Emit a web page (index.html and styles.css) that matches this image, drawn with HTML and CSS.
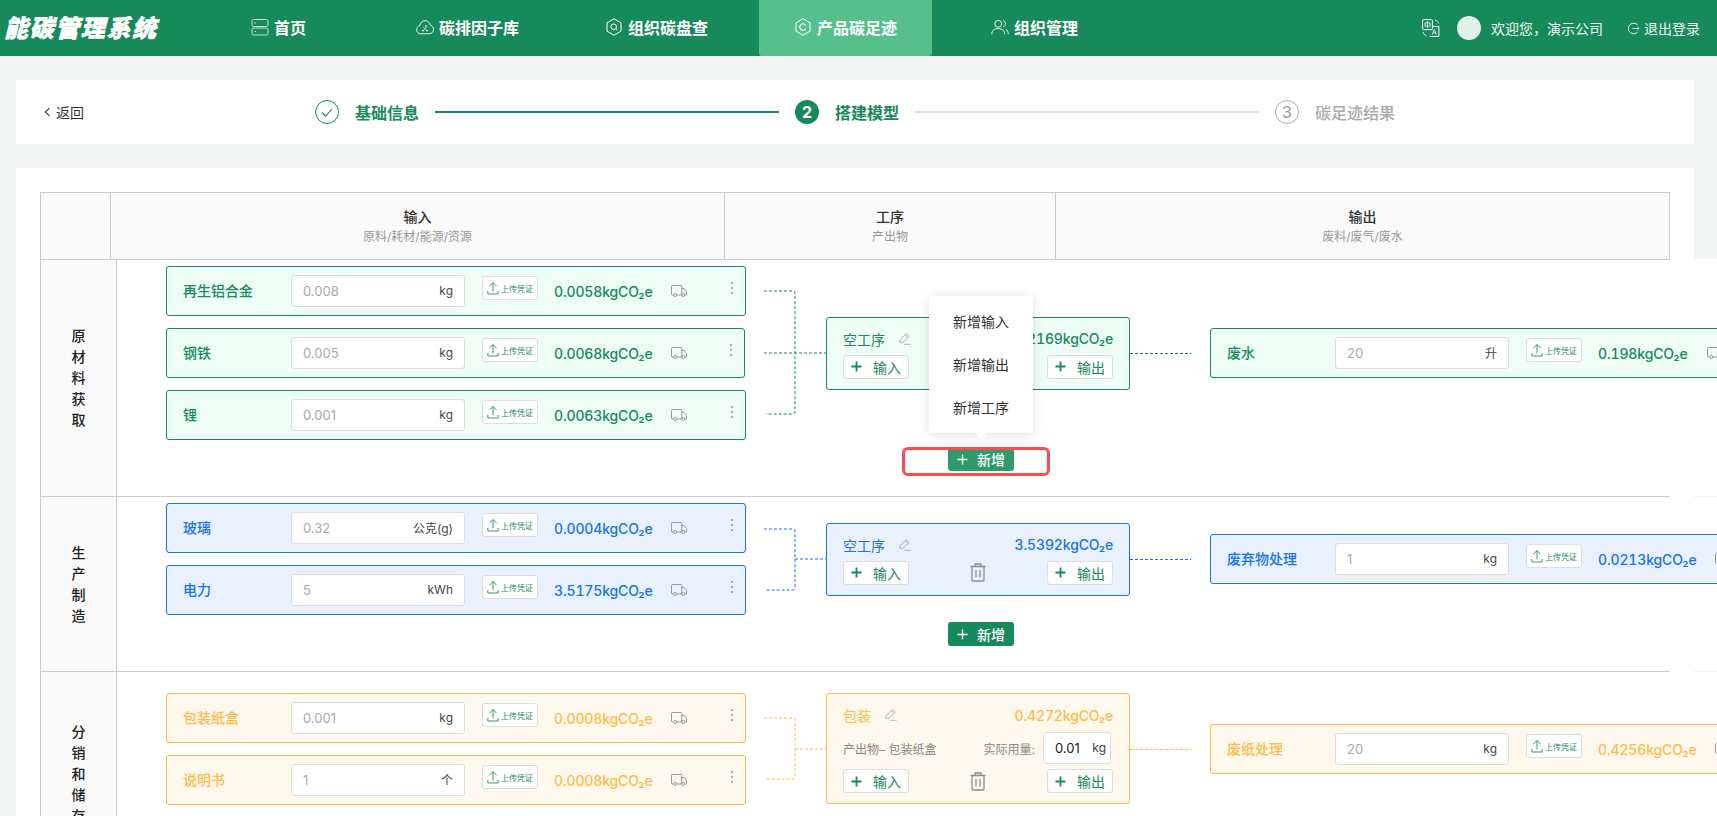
FILE: index.html
```html
<!DOCTYPE html>
<html lang="zh">
<head>
<meta charset="utf-8">
<title>能碳管理系统</title>
<link rel="stylesheet" href="styles.css">
</head>
<body>
<svg class="defs" aria-hidden="true">
  <symbol id="i-home" viewBox="0 0 18 18"><g fill="none" stroke="currentColor" stroke-width="1"><rect x="1" y="1.5" width="16" height="7" rx="1.6"/><rect x="1" y="10" width="16" height="7" rx="1.6"/></g><path d="M3.5 5h1.5M3.5 13.500h1.500" stroke="currentColor"/></symbol>
  <symbol id="i-cloud" viewBox="0 0 20 18"><path d="M5 16.500C2.500 16.500.7 14.600.7 12.200.7 9.900 2.200 8.200 4 7.700 4.700 4.400 7 2 10 2c3 0 5.300 2.200 5.800 5 2.200.5 3.600 2.500 3.600 4.700 0 2.700-2 4.800-4.600 4.800z" fill="none" stroke="currentColor"/><path d="M8 9l4 4M12 8.500l-4 4.500" stroke="currentColor" stroke-width=".7"/><circle cx="7.700" cy="13" r="1" fill="currentColor"/><circle cx="12.300" cy="13" r="1" fill="currentColor"/><circle cx="11" cy="8" r="1" fill="currentColor"/></symbol>
  <symbol id="i-hexq" viewBox="0 0 18 18"><path d="M9 .8l7 4v8.400l-7 4-7-4V4.800z" fill="none" stroke="currentColor" stroke-linejoin="round"/><circle cx="8.700" cy="8.700" r="2.800" fill="none" stroke="currentColor"/><path d="M10.800 10.800l1.400 1.400" stroke="currentColor"/></symbol>
  <symbol id="i-hexc" viewBox="0 0 18 18"><path d="M9 .8l7 4v8.400l-7 4-7-4V4.800z" fill="none" stroke="currentColor" stroke-linejoin="round"/><path d="M11.500 7a3.200 3.200 0 1 0 0 4" fill="none" stroke="currentColor" stroke-width="1.100" stroke-linecap="round"/></symbol>
  <symbol id="i-users" viewBox="0 0 20 18"><circle cx="8" cy="5.500" r="3.800" fill="none" stroke="currentColor"/><path d="M.8 17c0-4 3-6.200 7.200-6.200s7.200 2.200 7.200 6.200M13.500 1.800c1.500.6 2.400 2 2.400 3.600s-.9 3-2.400 3.600M16.500 11.500c1.700.9 2.700 2.800 2.700 5.500" fill="none" stroke="currentColor"/></symbol>
  <symbol id="i-lang" viewBox="0 0 18 18"><rect x=".6" y=".6" width="9.800" height="10" rx="1" fill="none" stroke="currentColor"/><path d="M3 3.800h5v3.400H3zM5.500 2v7" fill="none" stroke="currentColor" stroke-width=".8"/><path d="M7.500 17.400h9.400V7.500H11" fill="none" stroke="currentColor"/><path d="M10.300 15.400l2-5 2 5M11 13.800h2.700" fill="none" stroke="currentColor" stroke-width=".8"/><path d="M13 1.200c2 .2 3.400 1.500 3.600 3.500M1 12.800c.2 2 1.500 3.600 3.500 3.800" fill="none" stroke="currentColor" stroke-width=".8"/></symbol>
  <symbol id="i-logout" viewBox="0 0 14 14"><path d="M11.500 3.300A5.700 5.700 0 1 0 11.500 10.700" fill="none" stroke="currentColor"/><path d="M6 7h7M11 5.300L13 7l-2 1.700" fill="none" stroke="currentColor" stroke-width=".9"/></symbol>
  <symbol id="i-check" viewBox="0 0 24 24"><path d="M7 12.500l3.600 3.600L17 9" fill="none" stroke="currentColor" stroke-width="1.100"/></symbol>
  <symbol id="i-upload" viewBox="0 0 14 16"><path d="M7 12V2M2.800 6L7 1.500 11.200 6M1 11.500V15h12v-3.500" fill="none" stroke="currentColor" stroke-width="1"/></symbol>
  <symbol id="i-truck" viewBox="0 0 16 12"><path d="M2.500 10H1.500a1 1 0 0 1-1-1V1.500a1 1 0 0 1 1-1H10a.8.8 0 0 1 .8.8V10H6M10.800 3.500h2.300l2.400 3V10h-1.300" fill="none" stroke="currentColor"/><circle cx="4.200" cy="10" r="1.500" fill="none" stroke="currentColor"/><circle cx="12.300" cy="10" r="1.500" fill="none" stroke="currentColor"/></symbol>
  <symbol id="i-dots" viewBox="0 0 4 14"><circle cx="2" cy="2" r="1.100" fill="currentColor"/><circle cx="2" cy="7" r="1.100" fill="currentColor"/><circle cx="2" cy="12" r="1.100" fill="currentColor"/></symbol>
  <symbol id="i-plus" viewBox="0 0 12 12"><path d="M6 .5v11M.5 6h11" fill="none" stroke="currentColor"/></symbol>
  <symbol id="i-pencil" viewBox="0 0 12 12"><path d="M.8 9.200L1 6.800 7.300.6l2.900 2.800L3.800 9.500z M6.200 1.800l2.800 2.800M5 11.300h6.700" fill="none" stroke="currentColor" stroke-width=".9"/></symbol>
  <symbol id="i-trash" viewBox="0 0 16 19"><path d="M.5 3.500h15M5 3.500V1h6v2.500M2 3.500V17a1 1 0 0 0 1 1h10a1 1 0 0 0 1-1V3.500M6 7v7.500M10 7v7.500" fill="none" stroke="currentColor" stroke-width="1.300"/></symbol>
</svg>

<header class="topbar">
  <div class="logo">能碳管理系统</div>
  <nav class="nav">
    <a class="nav-item"><svg class="nav-icon dim"><use href="#i-home"/></svg>首页</a>
    <a class="nav-item"><svg class="nav-icon wide"><use href="#i-cloud"/></svg>碳排因子库</a>
    <a class="nav-item"><svg class="nav-icon"><use href="#i-hexq"/></svg>组织碳盘查</a>
    <a class="nav-item active"><svg class="nav-icon"><use href="#i-hexc"/></svg>产品碳足迹</a>
    <a class="nav-item"><svg class="nav-icon wide"><use href="#i-users"/></svg>组织管理</a>
  </nav>
  <div class="user">
    <svg class="lang-icon"><use href="#i-lang"/></svg>
    <span class="avatar"></span>
    <span class="welcome">欢迎您，演示公司</span>
    <span class="logout"><svg class="logout-icon"><use href="#i-logout"/></svg>退出登录</span>
  </div>
</header>

<main class="page">
  <section class="stepbar">
    <a class="back"><span class="chev"></span>返回</a>
    <div class="steps">
      <span class="step-dot done"><svg class="step-check"><use href="#i-check"/></svg></span>
      <span class="step-text on">基础信息</span>
      <span class="step-line on"></span>
      <span class="step-dot current">2</span>
      <span class="step-text on">搭建模型</span>
      <span class="step-line"></span>
      <span class="step-dot todo">3</span>
      <span class="step-text">碳足迹结果</span>
    </div>
  </section>

  <section class="board">
    <div class="thead">
      <div class="th th-stage"></div>
      <div class="th th-io"><b>输入</b><small>原料/耗材/能源/资源</small></div>
      <div class="th th-proc"><b>工序</b><small>产出物</small></div>
      <div class="th th-out"><b>输出</b><small>废料/废气/废水</small></div>
    </div>

    <div class="rows">
      <!-- 原材料获取 -->
      <div class="row green">
        <div class="stage"><span>原材料获取</span></div>
        <div class="row-main">
          <div class="flow">
            <div class="inputs">
              <div class="item"><span class="item-name">再生铝合金</span><span class="qty"><i>0.008</i><em>kg</em></span><span class="upload"><svg class="up-icon"><use href="#i-upload"/></svg>上传凭证</span><span class="val">0.0058kgCO₂e</span><svg class="truck"><use href="#i-truck"/></svg><svg class="dots"><use href="#i-dots"/></svg></div>
              <div class="item narrow"><span class="item-name">钢铁</span><span class="qty"><i>0.005</i><em>kg</em></span><span class="upload"><svg class="up-icon"><use href="#i-upload"/></svg>上传凭证</span><span class="val">0.0068kgCO₂e</span><svg class="truck"><use href="#i-truck"/></svg><svg class="dots"><use href="#i-dots"/></svg></div>
              <div class="item"><span class="item-name">锂</span><span class="qty"><i>0.001</i><em>kg</em></span><span class="upload"><svg class="up-icon"><use href="#i-upload"/></svg>上传凭证</span><span class="val">0.0063kgCO₂e</span><svg class="truck"><use href="#i-truck"/></svg><svg class="dots"><use href="#i-dots"/></svg></div>
            </div>
            <svg class="merge" width="80" height="174"><path d="M18 25H47Q49 25 49 27V146Q49 148 47 148H20M18 87H80"/></svg>
            <div class="proc">
              <div class="proc-top"><span class="proc-name">空工序</span><svg class="pencil"><use href="#i-pencil"/></svg><span class="val end">0.2169kgCO₂e</span></div>
              <div class="proc-btns"><span class="btn"><svg class="plus"><use href="#i-plus"/></svg>输入</span><svg class="trash"><use href="#i-trash"/></svg><span class="btn"><svg class="plus"><use href="#i-plus"/></svg>输出</span></div>
            </div>
            <div class="link"><span></span></div>
            <div class="item"><span class="item-name">废水</span><span class="qty"><i>20</i><em>升</em></span><span class="upload"><svg class="up-icon"><use href="#i-upload"/></svg>上传凭证</span><span class="val">0.198kgCO₂e</span><svg class="truck"><use href="#i-truck"/></svg><svg class="dots"><use href="#i-dots"/></svg></div>
          </div>
          <div class="add-row">
            <span class="add faded"><svg class="plus"><use href="#i-plus"/></svg>新增
              <span class="mark"></span>
              <span class="menu"><span>新增输入</span><span>新增输出</span><span>新增工序</span></span>
            </span>
          </div>
        </div>
      </div>

      <!-- 生产制造 -->
      <div class="row blue">
        <div class="stage"><span>生产制造</span></div>
        <div class="row-main">
          <div class="flow">
            <div class="inputs">
              <div class="item"><span class="item-name">玻璃</span><span class="qty"><i>0.32</i><em>公克(g)</em></span><span class="upload"><svg class="up-icon"><use href="#i-upload"/></svg>上传凭证</span><span class="val">0.0004kgCO₂e</span><svg class="truck"><use href="#i-truck"/></svg><svg class="dots"><use href="#i-dots"/></svg></div>
              <div class="item"><span class="item-name">电力</span><span class="qty"><i>5</i><em>kWh</em></span><span class="upload"><svg class="up-icon"><use href="#i-upload"/></svg>上传凭证</span><span class="val">3.5175kgCO₂e</span><svg class="truck"><use href="#i-truck"/></svg><svg class="dots"><use href="#i-dots"/></svg></div>
            </div>
            <svg class="merge" width="80" height="112"><path d="M18 26H47Q49 26 49 28V85Q49 87 47 87H20M49 56H80"/></svg>
            <div class="proc">
              <div class="proc-top"><span class="proc-name">空工序</span><svg class="pencil"><use href="#i-pencil"/></svg><span class="val end">3.5392kgCO₂e</span></div>
              <div class="proc-btns"><span class="btn"><svg class="plus"><use href="#i-plus"/></svg>输入</span><svg class="trash"><use href="#i-trash"/></svg><span class="btn"><svg class="plus"><use href="#i-plus"/></svg>输出</span></div>
            </div>
            <div class="link"><span></span></div>
            <div class="item"><span class="item-name">废弃物处理</span><span class="qty"><i>1</i><em>kg</em></span><span class="upload"><svg class="up-icon"><use href="#i-upload"/></svg>上传凭证</span><span class="val">0.0213kgCO₂e</span><svg class="truck"><use href="#i-truck"/></svg><svg class="dots"><use href="#i-dots"/></svg></div>
          </div>
          <div class="add-row"><span class="add"><svg class="plus"><use href="#i-plus"/></svg>新增</span></div>
        </div>
      </div>

      <!-- 分销和储存 -->
      <div class="row orange last">
        <div class="stage"><span>分销和储存</span></div>
        <div class="row-main">
          <div class="flow">
            <div class="inputs">
              <div class="item"><span class="item-name">包装纸盒</span><span class="qty"><i>0.001</i><em>kg</em></span><span class="upload"><svg class="up-icon"><use href="#i-upload"/></svg>上传凭证</span><span class="val">0.0008kgCO₂e</span><svg class="truck"><use href="#i-truck"/></svg><svg class="dots"><use href="#i-dots"/></svg></div>
              <div class="item"><span class="item-name">说明书</span><span class="qty"><i>1</i><em>个</em></span><span class="upload"><svg class="up-icon"><use href="#i-upload"/></svg>上传凭证</span><span class="val">0.0008kgCO₂e</span><svg class="truck"><use href="#i-truck"/></svg><svg class="dots"><use href="#i-dots"/></svg></div>
            </div>
            <svg class="merge" width="80" height="112"><path d="M18 25H47Q49 25 49 27V84Q49 86 47 86H20M49 56H80"/></svg>
            <div class="proc tall">
              <div class="proc-top"><span class="proc-name">包装</span><svg class="pencil"><use href="#i-pencil"/></svg><span class="val end">0.4272kgCO₂e</span></div>
              <div class="proc-mid"><span class="output-name">产出物– 包装纸盒</span><span class="use-label">实际用量:</span><span class="qty small"><b>0.01</b><em>kg</em></span></div>
              <div class="proc-btns"><span class="btn"><svg class="plus"><use href="#i-plus"/></svg>输入</span><svg class="trash"><use href="#i-trash"/></svg><span class="btn"><svg class="plus"><use href="#i-plus"/></svg>输出</span></div>
            </div>
            <div class="link"><span></span></div>
            <div class="item"><span class="item-name">废纸处理</span><span class="qty"><i>20</i><em>kg</em></span><span class="upload"><svg class="up-icon"><use href="#i-upload"/></svg>上传凭证</span><span class="val">0.4256kgCO₂e</span><svg class="truck"><use href="#i-truck"/></svg><svg class="dots"><use href="#i-dots"/></svg></div>
          </div>
        </div>
      </div>
    </div>
  </section>
</main>
</body>
</html>
```
FILE: styles.css
```css
* { box-sizing: border-box; }
html, body { margin: 0; height: 816px; overflow: hidden; }
body {
  background: #f4f6f5;
  font-family: Inter, "Noto Sans CJK SC", "Noto Sans", sans-serif;
  font-size: 14px;
  color: #333;
}
.defs { position: absolute; width: 0; height: 0; }
svg { display: block; flex: none; overflow: visible; }

/* top bar */
.topbar {
  height: 56px;
  background: #178a5c;
  color: #fff;
  display: flex;
  align-items: stretch;
  padding-left: 4px;
}
.logo {
  width: 188px;
  font-size: 24px;
  font-weight: 900;
  font-style: italic;
  letter-spacing: 1.6px;
  line-height: 58px;
  white-space: nowrap;
  -webkit-text-stroke: .6px #fff;
}
.nav { display: flex; gap: 16px; }
.nav-item {
  min-width: 173px;
  display: flex;
  align-items: center;
  justify-content: center;
  gap: 5px;
  padding-bottom: 3px;
  font-size: 16px;
  font-weight: 700;
}
.nav-item.active { background: #55c08c; border-radius: 0 0 3px 3px; }
.nav-icon { width: 18px; height: 18px; }
.nav-icon.dim { opacity: .75; }
.user {
  margin-left: auto;
  padding-right: 17px;
  display: flex;
  align-items: center;
}
.lang-icon { width: 18px; height: 18px; margin-right: 17px; }
.avatar { width: 24px; height: 24px; border-radius: 50%; background: #e3efe9; margin-right: 10px; }
.welcome { margin-right: 24px; color: #f2f8f5; }
.logout { display: flex; align-items: center; gap: 4px; color: #f2f8f5; }
.logout-icon { width: 13px; height: 13px; }

/* step bar */
.page { padding: 24px 23px 0 16px; }
.stepbar {
  height: 64px;
  background: #fff;
  display: flex;
  align-items: center;
  padding-left: 30px;
}
.back { display: flex; align-items: center; width: 37px; gap: 4px; color: #333; white-space: nowrap; }
.chev {
  width: 6px; height: 6px; flex: none;
  border-left: 1px solid #333; border-bottom: 1px solid #333;
  transform: rotate(45deg);
}
.steps { margin-left: 232px; display: flex; align-items: center; }
.step-dot {
  width: 24px; height: 24px; border-radius: 50%;
  display: flex; align-items: center; justify-content: center;
  flex: none;
}
.step-dot.done { border: 1px solid #178a5c; color: #178a5c; }
.step-check { width: 24px; height: 24px; }
.step-dot.current { background: #178a5c; color: #fff; font-weight: 700; font-size: 16px; }
.step-dot.todo { border: 1px solid #aaa; color: #999; font-size: 16px; }
.step-text { margin-left: 16px; font-size: 16px; font-weight: 500; color: #aaa; white-space: nowrap; }
.step-text.on { font-weight: 700; color: #178a5c; }
.step-line { width: 344px; height: 2px; margin: 0 16px; background: #ddd; }
.step-line.on { background: #178a5c; }

/* board */
.board { margin-top: 24px; height: 700px; background: #fff; padding: 24px 24px 0; }
.thead {
  position: relative;
  z-index: 1;
  width: 1630px;
  height: 68px;
  margin-bottom: -1px;
  display: flex;
  background: #fafafa;
  border: 1px solid #ccc;
}
.th {
  padding-top: 14px;
  display: flex;
  flex-direction: column;
  align-items: center;
  border-right: 1px solid #ccc;
  line-height: 20px;
}
.th b { font-weight: 500; color: #333; }
.th small { font-size: 12px; color: #999; }
.th-stage { width: 70px; }
.th-io { width: 614px; }
.th-proc { width: 331px; }
.th-out { flex: 1; border-right: 0; }

.rows { position: relative; width: 1800px; background: #fff; }
.row {
  position: relative;
  display: flex;
  --c: #178a5c;
  --bg: #eefdf6;
}
.row.blue { --c: #1a73e8; --bg: #e8f1fd; }
.row.orange { --c: #fdbb4e; --bg: #fff8ec; }
.row::after {
  content: "";
  position: absolute;
  left: 0; bottom: -1px;
  width: 1630px; height: 1px;
  background: #ccc;
  z-index: 1;
}
.row::before {
  content: "";
  position: absolute;
  left: 1653px; bottom: -1px;
  width: 147px; height: 1px;
  background: #f4f6f5;
  z-index: 1;
}
.row.last { height: 204px; }
.stage {
  width: 77px;
  flex: none;
  background: #f9f9f9;
  border-left: 1px solid #ccc;
  border-right: 1px solid #ccc;
  display: flex;
  align-items: center;
  justify-content: center;
  color: #222;
  font-weight: 500;
}
.stage span { width: 14px; line-height: 21px; }
.row-main { padding: 7px 0 25px 49px; }
.row.last .row-main { padding-top: 22px; }
.flow { display: flex; align-items: center; color: var(--c); }
.inputs { display: flex; flex-direction: column; gap: 12px; }

/* item card */
.item {
  width: 580px;
  height: 50px;
  flex: none;
  display: flex;
  align-items: center;
  padding: 0 11px 0 16px;
  background: var(--bg);
  border: 1px solid var(--c);
  border-radius: 3px;
}
.item.narrow { width: 579px; }
.item-name { width: 108px; flex: none; padding-bottom: 2px; font-weight: 500; color: var(--c); white-space: nowrap; }
.qty {
  width: 174px; height: 32px; flex: none;
  display: flex; align-items: center; justify-content: space-between;
  padding: 0 11px;
  background: #fff;
  border: 1px solid #ddd;
  border-radius: 3px;
  font-size: 13px;
}
.qty i { font-style: normal; color: #aaa; }
.qty em { font-style: normal; color: #444; font-size: 12px; padding-bottom: 2px; }
.upload {
  width: 56px; height: 24px; flex: none;
  align-self: flex-start;
  margin: 9px 0 0 17px;
  display: flex; align-items: center; justify-content: center; gap: 2px;
  background: #fff;
  border: 1px solid #ddd;
  border-radius: 3px;
  font-size: 8px;
  color: #178a5c;
  white-space: nowrap;
}
.up-icon { width: 12px; height: 14px; }
.val {
  margin-left: 16px;
  font-weight: 500;
  font-variant-numeric: tabular-nums;
  letter-spacing: -.15px;
  color: var(--c);
  white-space: nowrap;
}
.val.end { margin-left: auto; }
.truck { width: 16px; height: 12px; margin-left: 19px; color: #999; }
.dots { width: 4px; height: 14px; margin: 0 0 6px auto; color: #999; }

/* connectors */
.merge { flex: none; fill: none; stroke: currentColor; stroke-width: 1; stroke-dasharray: 3 2; }
.link { width: 80px; flex: none; }
.link span {
  display: block;
  width: 61px;
  height: 1px;
  background: repeating-linear-gradient(90deg, currentColor 0 3px, transparent 3px 5px);
}

/* process card */
.proc {
  width: 304px; flex: none;
  padding: 10px 16px;
  background: var(--bg);
  border: 1px solid var(--c);
  border-radius: 3px;
}
.proc.tall { margin-bottom: 1px; }
.proc-top { height: 22px; display: flex; align-items: center; }
.proc-name { color: var(--c); }
.pencil { width: 12px; height: 12px; margin-left: 14px; color: #aaa; }
.proc-btns { margin-top: 5px; display: flex; justify-content: space-between; align-items: center; }
.btn {
  width: 66px; height: 24px;
  display: flex; align-items: center; justify-content: center; gap: 11px;
  background: #fff;
  border: 1px solid #ddd;
  border-radius: 3px;
  color: #178a5c;
}
.plus { width: 11px; height: 11px; stroke-width: 1.5; }
.btn .plus { stroke-width: 2; }
.trash { width: 16px; height: 19px; color: #8c8c8c; }
.proc-mid {
  margin: 6px 2px 0 0;
  display: flex; align-items: center;
  font-size: 12px; color: #888;
}
.output-name { margin-right: auto; }
.use-label { margin-right: 8px; }
.qty.small { width: 68px; padding: 0 4px 0 11px; }
.qty.small b { font-weight: 400; color: #222; font-size: 13px; }

/* add button + popover */
.add-row { margin-top: 7px; padding-left: 782px; height: 24px; }
.add {
  position: relative;
  width: 66px; height: 24px;
  display: flex; align-items: center; justify-content: center; gap: 9px;
  background: #178a5c;
  border-radius: 3px;
  color: #fff;
  font-weight: 500;
}
.add.faded { background: #309a6c; }
.mark {
  position: absolute;
  left: -46px; top: 0;
  width: 148px; height: 29px;
  border: 3px solid #fb4d4d;
  border-radius: 6px;
}
.menu {
  position: absolute;
  left: -19px; bottom: 38px;
  width: 104px;
  padding: 4px 0;
  display: flex; flex-direction: column;
  align-items: center;
  background: #fff;
  border-radius: 4px;
  box-shadow: 0 2px 12px rgba(0, 0, 0, .12);
  color: #333;
  font-weight: 400;
}
.menu::after {
  content: "";
  position: absolute;
  left: 47px; bottom: -4px;
  width: 9px; height: 9px;
  background: #fff;
  transform: rotate(45deg);
}
.menu span { height: 43px; line-height: 43px; }
```
